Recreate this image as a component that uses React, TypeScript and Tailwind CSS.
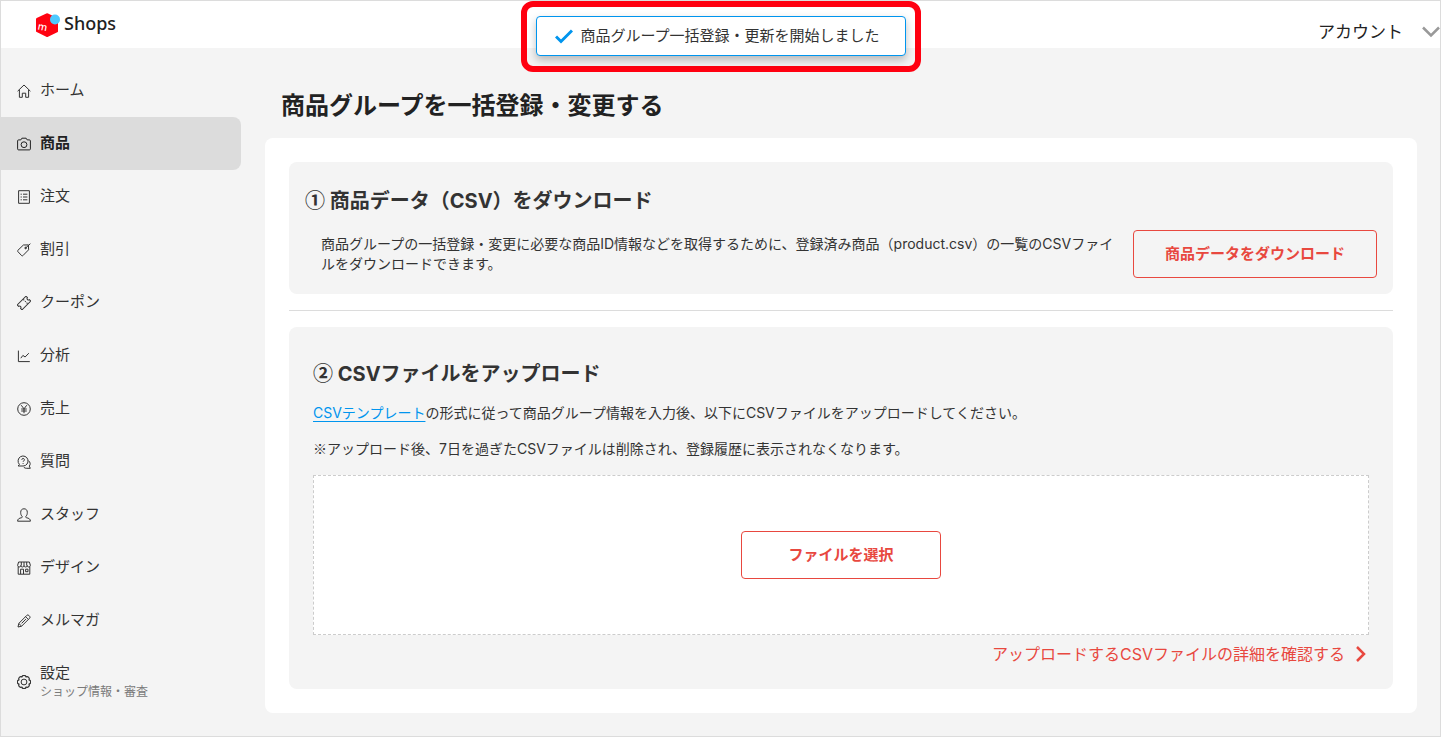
import type { ReactNode } from 'react';

type NavItem = {
  label: string;
  sub?: string;
  icon: ReactNode;
  active?: boolean;
};

const navItems: NavItem[] = [
  {
    label: 'ホーム',
    icon: (
      <>
        <path d="M.6 7.2 7 1l6.4 6.2" />
        <path d="M2.4 6v7.3h2.9V9.2h3.4v4.1h2.9V6" />
      </>
    ),
  },
  {
    label: '商品',
    active: true,
    icon: (
      <>
        <path d="M1.6 2.9h2.2L4.9 1.2h4.2l1.1 1.7h2.2a1 1 0 0 1 1 1v8a1 1 0 0 1-1 1H1.6a1 1 0 0 1-1-1v-8a1 1 0 0 1 1-1z" />
        <circle cx="7" cy="7.7" r="2.9" />
      </>
    ),
  },
  {
    label: '注文',
    icon: (
      <>
        <path d="M1.6.7h10.8v12.6H1.6z" />
        <path d="M3.6 4.2h1.2M3.6 7h1.2M3.6 9.8h1.2M6 4.2h4.4M6 7h4.4M6 9.8h4.4" />
      </>
    ),
  },
  {
    label: '割引',
    icon: (
      <>
        <path d="M.8 7.4 6.4 2l5-.1.2 4.9-5.8 5.9a.8.8 0 0 1-1.1 0L.8 8.5a.8.8 0 0 1 0-1.1z" />
        <path d="m9 4.6 4.4-3.9" />
        <circle cx="8.6" cy="5" r=".8" fill="currentColor" />
      </>
    ),
  },
  {
    label: 'クーポン',
    icon: (
      <g transform="rotate(-45 7 7)">
        <path d="M.8 3.6h12.4v2.1a1.3 1.3 0 0 0 0 2.6v2.1H.8V8.3a1.3 1.3 0 0 0 0-2.6z" />
        <path d="M9 4v1.4M9 6.4v1.2M9 8.6V10" />
      </g>
    ),
  },
  {
    label: '分析',
    icon: (
      <>
        <path d="M1.4 1.6v11h11.4" />
        <path d="m3.8 9.2 2.1-2.8 2.2 1.6 3.7-3.8" />
      </>
    ),
  },
  {
    label: '売上',
    icon: (
      <>
        <circle cx="7" cy="7" r="6.3" />
        <path d="M4.2 3.2 7 6.8l2.8-3.6M7 6.8v4.4M4.2 7h5.6M4.2 9h5.6" />
      </>
    ),
  },
  {
    label: '質問',
    icon: (
      <>
        <path d="M2.4 9.4 1.2 11h4.9A5 5 0 1 0 2.4 9.4z" />
        <path d="M4.8 4.8a1.3 1.3 0 1 1 1.9 1.1c-.4.2-.6.5-.6 1M6.1 8v.9" />
        <path d="M11.4 5.6c2 1.4 2.3 3.8.9 5.5l1 2.2H9.8a4 4 0 0 1-3-1" />
      </>
    ),
  },
  {
    label: 'スタッフ',
    icon: (
      <path d="M.6 13.2c0-2.2 1.5-3 4-3.5.9-.2.9-1 .2-1.7C3.9 7 3.7 5.8 3.7 4.3 3.7 2 5 .8 7 .8s3.3 1.2 3.3 3.5c0 1.5-.2 2.7-1.1 3.7-.7.7-.7 1.5.2 1.7 2.5.5 4 1.3 4 3.5z" />
    ),
  },
  {
    label: 'デザイン',
    icon: (
      <>
        <path d="M1.6 1h10.8l1 3.4a1.5 1.5 0 0 1-3.2 0 1.6 1.6 0 0 1-3.2 0 1.6 1.6 0 0 1-3.2 0 1.6 1.6 0 0 1-3.2 0z" />
        <path d="M4.3 1v3.4M7 1v3.4M9.7 1v3.4M1.2 6v7.2h11.6V6M3.6 13V8.2h2.9V13M8.6 8.2h2.4v2.5H8.6z" />
      </>
    ),
  },
  {
    label: 'メルマガ',
    icon: (
      <>
        <path d="m1 13 .8-3.6 8-8a1.4 1.4 0 0 1 2 0l.8.8a1.4 1.4 0 0 1 0 2l-8 8z" />
        <path d="m8.6 2.7 2.7 2.7M1.9 9.5l2.6 2.6M4.6 9.4l4.3-4.3" />
      </>
    ),
  },
  {
    label: '設定',
    sub: 'ショップ情報・審査',
    icon: (
      <>
        <path
          strokeWidth="1.2"
          d="M12 4.9a2.15 2.15 0 0 1 0 4.2 2.15 2.15 0 0 1-2.9 2.9 2.15 2.15 0 0 1-4.2 0A2.15 2.15 0 0 1 2 9.1a2.15 2.15 0 0 1 0-4.2A2.15 2.15 0 0 1 4.9 2a2.15 2.15 0 0 1 4.2 0A2.15 2.15 0 0 1 12 4.9z"
        />
        <circle cx="7" cy="7" r="2.9" />
      </>
    ),
  },
];

function Header() {
  return (
    <header className="flex h-[47px] items-center justify-between bg-white pl-[35px]">
      <a href="#" className="flex items-start gap-1 text-[#222]">
        <svg className="h-6 w-6" viewBox="0 0 24 24" aria-hidden="true">
          <path d="M10.3.5a2 2 0 0 1 1.7 0l9.3 4.6a1.2 1.2 0 0 1 .7 1.1v12a1.2 1.2 0 0 1-.7 1.1L12 23.7a2 2 0 0 1-1.7 0L.7 19a1.2 1.2 0 0 1-.7-1.1V6.2A1.2 1.2 0 0 1 .7 5.1z" fill="#ff0211" />
          <circle cx="19" cy="6.5" r="5" fill="#4dc9ff" />
          <text x="1.5" y="17" fontSize="10" fontWeight="500" fill="#fff" fontFamily="Noto Sans, sans-serif" transform="rotate(12 5 15)">
            m
          </text>
        </svg>
        <span className="font-['Noto_Sans'] text-lg leading-5 font-medium">Shops</span>
      </a>
      <button type="button" className="flex items-center gap-[19px] pt-3.5 text-[17px] leading-6 text-[#222]">
        アカウント
        <svg className="h-3 w-[18px]" viewBox="0 0 18 12" fill="none" stroke="#999" strokeWidth="2.5" aria-hidden="true">
          <path d="m1 1.5 8 8 8-8" />
        </svg>
      </button>
    </header>
  );
}

function Sidebar() {
  return (
    <nav className="w-60 shrink-0 pt-4">
      <ul>
        {navItems.map((item) => (
          <li key={item.label}>
            <a
              href="#"
              aria-current={item.active ? 'page' : undefined}
              className={
                item.active
                  ? 'flex items-center gap-[9px] rounded-r-lg bg-[#dcdcdc] p-4 font-bold text-[#222]'
                  : 'flex items-center gap-[9px] p-4 text-[#333]'
              }
            >
              <svg
                className="h-3.5 w-3.5 shrink-0"
                viewBox="0 0 14 14"
                fill="none"
                stroke="currentColor"
                strokeWidth="1"
                strokeLinejoin="round"
                aria-hidden="true"
              >
                {item.icon}
              </svg>
              <span className="flex flex-col">
                <span className="text-[15px] leading-5">{item.label}</span>
                {item.sub ? (
                  <span className="text-xs leading-[18px] text-[#7a7a7a]">{item.sub}</span>
                ) : (
                  <span className="h-px" />
                )}
              </span>
            </a>
          </li>
        ))}
      </ul>
    </nav>
  );
}

function Toast() {
  return (
    <div className="pointer-events-none absolute inset-x-0 top-0 flex justify-center">
      <div className="rounded-xl border-6 border-[#ff0010] px-[9px] pt-[9px] pb-2.5">
        <div
          role="status"
          className="flex h-10 w-[370px] items-center gap-2 rounded border border-[#0095ee] bg-white px-[18px] text-[15px] leading-6 text-[#333] shadow-[0_4px_8px_rgba(0,0,0,0.25)]"
        >
          <svg className="h-[18px] w-[18px]" viewBox="0 0 18 18" fill="none" stroke="#0095ee" strokeWidth="3" aria-hidden="true">
            <path d="m1 9.5 5 5L17 3.5" />
          </svg>
          商品グループ一括登録・更新を開始しました
        </div>
      </div>
    </div>
  );
}

// Inter has its own narrow/oversized glyphs for these, so take them from the CJK font
function Mark({ children }: { children: string }) {
  return <span className="font-['Noto_Sans_CJK_JP'] leading-none">{children}</span>;
}

export default function App() {
  return (
    <div
      lang="ja"
      className="relative min-h-screen overflow-x-hidden border border-[#dcdcdc] bg-[#f4f4f4] font-[Inter,'Noto_Sans_CJK_JP',sans-serif] text-[#333]"
    >
      <Header />
      <Toast />
      <div className="flex">
        <Sidebar />
        <main className="min-w-0 flex-1 pt-10 pr-[23px] pb-[23px] pl-6">
          <h1 className="pl-4 text-2xl leading-9 font-bold text-[#222]">商品グループを一括登録・変更する</h1>

          <div className="mt-3.5 rounded-lg bg-white p-6">
            <section className="rounded-lg bg-[#f4f4f4] p-4 pt-6">
              <h2 className="text-xl leading-[30px] font-bold">
                <Mark>①</Mark> 商品データ（CSV）をダウンロード
              </h2>
              <div className="mt-3.5 flex items-center gap-4">
                <p className="min-w-0 flex-1 pl-4 text-sm leading-5">
                  商品グループの一括登録・変更に必要な商品ID情報などを取得するために、登録済み商品（product.csv）の一覧のCSVファイルをダウンロードできます。
                </p>
                <button
                  type="button"
                  className="h-12 w-[244px] shrink-0 rounded border border-[#e8483f] text-[15px] font-bold text-[#e8483f]"
                >
                  商品データをダウンロード
                </button>
              </div>
            </section>

            <hr className="my-4 border-[#dcdcdc]" />

            <section className="rounded-lg bg-[#f4f4f4] p-6 pt-8">
              <h2 className="text-xl leading-[30px] font-bold">
                <Mark>②</Mark> CSVファイルをアップロード
              </h2>
              <p className="mt-3.5 text-sm leading-5">
                <a href="#" className="text-[#0095ee] underline underline-offset-3">
                  CSVテンプレート
                </a>
                の形式に従って商品グループ情報を入力後、以下にCSVファイルをアップロードしてください。
              </p>
              <p className="mt-4 text-sm leading-5">
                <Mark>※</Mark>
                アップロード後、7日を過ぎたCSVファイルは削除され、登録履歴に表示されなくなります。
              </p>
              <div className="mt-4 flex h-40 items-center justify-center border border-dashed border-[#ccc] bg-white">
                <button
                  type="button"
                  className="h-12 w-[200px] rounded border border-[#e8483f] text-[15px] font-bold text-[#e8483f]"
                >
                  ファイルを選択
                </button>
              </div>
              <div className="mt-2 flex justify-end">
                <a href="#" className="flex items-center gap-2 text-base leading-[22px] text-[#e8483f]">
                  アップロードするCSVファイルの詳細を確認する
                  <svg className="h-4 w-4" viewBox="0 0 16 16" fill="none" stroke="currentColor" strokeWidth="2.5" aria-hidden="true">
                    <path d="m4 1 7 7-7 7" />
                  </svg>
                </a>
              </div>
            </section>
          </div>
        </main>
      </div>
    </div>
  );
}
